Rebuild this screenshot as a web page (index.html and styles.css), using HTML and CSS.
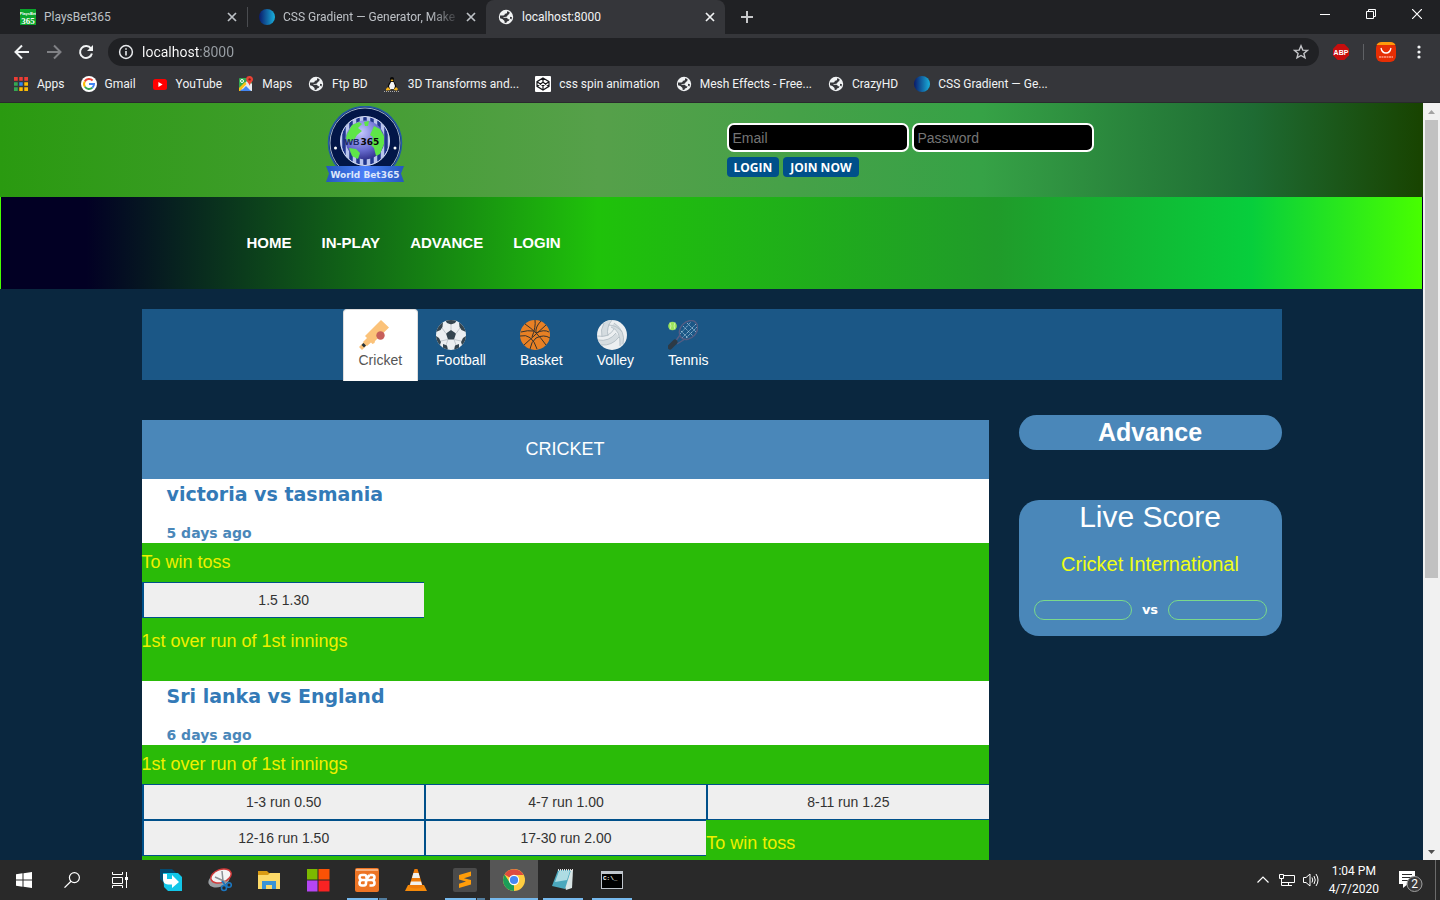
FILE: index.html
```html
<!DOCTYPE html>
<html lang="en">
<head>
<meta charset="utf-8">
<meta name="viewport" content="width=device-width, initial-scale=1">
<title>localhost:8000</title>
<link rel="stylesheet" href="styles.css">
</head>
<body>
<svg class="defs" aria-hidden="true">
  <symbol id="globe" viewBox="0 0 16 16">
    <circle cx="8" cy="8" r="7.2" fill="#f1f3f4"/>
    <path d="M2 6.500H5.500Q7 6.500 6.800 4.800Q8.500 5 9 4V2.200L11.500 3Q12 5.500 9.800 6Q9.600 8 7 8H5.500V8.800H8.500Q9.800 9 9.800 10.200H11.500Q11.500 12 9 12.500L8.200 14L6.600 13.800Q7 11.800 5.500 11Q5 9.600 2 9.200Z" fill="#35363a"/>
    <path d="M12 7.800L14 8.200L13.400 10.600L12 9.400Z" fill="#35363a"/>
  </symbol>
  <symbol id="gradient" viewBox="0 0 16 16">
    <linearGradient id="gradient-fill"><stop offset="0" stop-color="#0a1a6a"/><stop offset="1" stop-color="#19b0dc"/></linearGradient>
    <circle cx="8" cy="8" r="8" fill="url(#gradient-fill)"/>
  </symbol>
  <symbol id="close" viewBox="0 0 16 16"><path d="M4 4L12 12M12 4L4 12" stroke="currentColor" stroke-width="1.7"/></symbol>
</svg>

<div class="desktop">
  <div class="tabstrip">
    <div class="tab">
      <svg class="icon16" viewBox="0 0 16 16"><rect width="16" height="16" fill="#0ba52c"/><text x="8" y="6" class="fav-top">PlaysBet</text><text x="8" y="15" class="fav-bottom">365</text></svg>
      <span class="tab-title">PlaysBet365</span>
      <button class="tab-close" aria-label="Close tab"><svg class="icon16"><use href="#close"/></svg></button>
    </div>
    <div class="tab tab-divided">
      <svg class="icon16"><use href="#gradient"/></svg>
      <span class="tab-title tab-title-faded">CSS Gradient — Generator, Make</span>
      <button class="tab-close" aria-label="Close tab"><svg class="icon16"><use href="#close"/></svg></button>
    </div>
    <div class="tab tab-active">
      <svg class="icon16"><use href="#globe"/></svg>
      <span class="tab-title">localhost:8000</span>
      <button class="tab-close" aria-label="Close tab"><svg class="icon16"><use href="#close"/></svg></button>
    </div>
    <button class="tab-new" aria-label="New tab"><svg class="icon16" viewBox="0 0 16 16"><path d="M8 2V14M2 8H14" stroke="#c6c7c9" stroke-width="2"/></svg></button>
    <div class="window-buttons">
      <button class="window-button" aria-label="Minimize"><svg class="icon10" viewBox="0 0 10 10"><path d="M0 5.5H10" stroke="#fff"/></svg></button>
      <button class="window-button" aria-label="Restore"><svg class="icon10" viewBox="0 0 10 10"><path d="M.5 2.5H7.5V9.5H.5ZM2.5 2.5V.5H9.5V7.5H7.5" fill="none" stroke="#fff"/></svg></button>
      <button class="window-button" aria-label="Close"><svg class="icon10" viewBox="0 0 10 10"><path d="M0 0L10 10M10 0L0 10" stroke="#fff" stroke-width="1.2"/></svg></button>
    </div>
  </div>

  <div class="toolbar">
    <button class="tool" aria-label="Back"><svg class="icon16" viewBox="0 0 16 16"><path d="M15 8H2M8 1.5L1.5 8L8 14.5" fill="none" stroke="#f1f3f4" stroke-width="2"/></svg></button>
    <button class="tool" aria-label="Forward"><svg class="icon16" viewBox="0 0 16 16"><path d="M1 8H14M8 1.5L14.5 8L8 14.5" fill="none" stroke="#808185" stroke-width="2"/></svg></button>
    <button class="tool" aria-label="Reload"><svg class="icon16" viewBox="0 0 16 16"><path d="M13 4.6A6 6 0 1 0 13.9 9.4" fill="none" stroke="#f1f3f4" stroke-width="2"/><path d="M15 1V7H9Z" fill="#f1f3f4"/></svg></button>
    <div class="omnibox">
      <svg class="icon16" viewBox="0 0 16 16"><circle cx="8" cy="8" r="6.4" fill="none" stroke="#e8eaed" stroke-width="1.5"/><path d="M8 7V11.6M8 4.2V5.8" stroke="#e8eaed" stroke-width="1.6"/></svg>
      <input class="address" type="text" value="localhost:8000" aria-label="Address">
      <button class="star" aria-label="Bookmark this page"><svg class="icon16" viewBox="0 0 16 16"><path d="M8 1.8L9.8 6.1L14.4 6.4L10.9 9.4L12 13.9L8 11.5L4 13.9L5.1 9.4L1.6 6.4L6.2 6.1Z" fill="none" stroke="#c4c5c8" stroke-width="1.4"/></svg></button>
    </div>
    <button class="extension" aria-label="Adblock Plus"><svg class="icon16" viewBox="0 0 16 16"><path d="M4.7 0H11.3L16 4.7V11.3L11.3 16H4.7L0 11.3V4.7Z" fill="#c70d0d"/><text x="8" y="11" class="abp">ABP</text></svg></button>
    <span class="toolbar-divider"></span>
    <button class="extension" aria-label="AliExpress"><svg class="icon22" viewBox="0 0 22 22"><rect x="1" y="1" width="20" height="20" rx="6" fill="#e62e04"/><path d="M1.5 4Q3 1 7 1H15Q19 1 20.500 4Z" fill="#ff9a0c"/><path d="M6 7Q7 12 11 12T16 7" fill="none" stroke="#fff" stroke-width="1.3"/><path d="M4 16H18" stroke="#ff9c85" stroke-width="1.6" stroke-dasharray="2 .5"/></svg></button>
    <button class="extension" aria-label="Menu"><svg class="icon16" viewBox="0 0 16 16" fill="#f1f3f4"><circle cx="8" cy="3" r="1.6"/><circle cx="8" cy="8" r="1.6"/><circle cx="8" cy="13" r="1.6"/></svg></button>
  </div>

  <nav class="bookmarks" aria-label="Bookmarks">
    <a class="bookmark" href="#"><svg class="icon16" viewBox="0 0 16 16"><path d="M1 1H5V5H1ZM6 1H10V5H6ZM11 1H15V5H11Z" fill="#ee3d35"/><path d="M1 6H5V10H1Z" fill="#34a853"/><path d="M6 6H10V10H6Z" fill="#2f86ee"/><path d="M11 6H15V10H11Z" fill="#fbbc05"/><path d="M1 11H5V15H1Z" fill="#34a853"/><path d="M6 11H10V15H6ZM11 11H15V15H11Z" fill="#fbbc05"/><path d="M0 5.500H16M0 10.500H16M5.500 0V16M10.500 0V16" stroke="#35363a" stroke-width="1.5"/></svg>Apps</a>
    <a class="bookmark" href="#"><svg class="icon16" viewBox="0 0 16 16"><circle cx="8" cy="8" r="8" fill="#fff"/><g fill="none" stroke-width="2"><path d="M11.600 4.500A5 5 0 0 0 3.800 5.400" stroke="#ea4335"/><path d="M3.800 5.400A5 5 0 0 0 3.900 10.800" stroke="#fbbc05"/><path d="M3.900 10.800A5 5 0 0 0 11.300 11.700" stroke="#34a853"/><path d="M11.300 11.700A5 5 0 0 0 13 8H8" stroke="#4285f4"/></g></svg>Gmail</a>
    <a class="bookmark" href="#"><svg class="icon16" viewBox="0 0 16 16"><rect x="1" y="3" width="14" height="11" rx="2.500" fill="#f00"/><path d="M6.400 6L10.600 8.500L6.400 11Z" fill="#fff"/></svg>YouTube</a>
    <a class="bookmark" href="#"><svg class="icon16" viewBox="0 0 16 16"><rect x="1" y="2" width="13" height="13" rx="1" fill="#34a853"/><path d="M1 15L8 8L14 15Z" fill="#4285f4"/><path d="M1 13L10 4L14 8V15Z" fill="#e8eaed"/><path d="M3 15L8 10L13 15Z" fill="#4285f4"/><path d="M1 12L7 6L8.500 8L2 15H1Z" fill="#fbc116"/><circle cx="4" cy="5" r="1.500" fill="none" stroke="#fff"/><path d="M11.500 0A3.300 3.300 0 0 1 15 3.400C15 5.500 12 7 11.700 10C11.200 7 8.200 5.500 8.200 3.400A3.300 3.300 0 0 1 11.500 0Z" fill="#e84335"/><circle cx="11.600" cy="3.400" r="1.200" fill="#8b1d17"/></svg>Maps</a>
    <a class="bookmark" href="#"><svg class="icon16"><use href="#globe"/></svg>Ftp BD</a>
    <a class="bookmark" href="#"><svg class="icon16" viewBox="0 0 16 16"><path d="M6 2Q8 0 10 2L10 6Q13 9 12 13H4Q3 9 6 6Z" fill="#090909"/><path d="M7 6H9.500L11 10L10 13H6L5 10Z" fill="#f5f5f5"/><path d="M6.300 4L8 3.500L9.700 4L8 5.500ZM2 13L4 11L7 14L2 14.500ZM9.500 14L12 11L14 13L13 14.500Z" fill="#f7b51b"/><path d="M0 15.500H16" stroke="#aaa" stroke-dasharray="1 1"/></svg>3D Transforms and...</a>
    <a class="bookmark" href="#"><svg class="icon16" viewBox="0 0 16 16"><rect width="16" height="16" rx="1" fill="#fff"/><path d="M8 2L14 5.700V10.300L8 14L2 10.300V5.700ZM2 5.700L8 9.800L14 5.700M2 10.300L8 6.200L14 10.300M8 2V6.200M8 9.800V14" fill="none" stroke="#15161a" stroke-width="1.200"/></svg>css spin animation</a>
    <a class="bookmark" href="#"><svg class="icon16"><use href="#globe"/></svg>Mesh Effects - Free...</a>
    <a class="bookmark" href="#"><svg class="icon16"><use href="#globe"/></svg>CrazyHD</a>
    <a class="bookmark" href="#"><svg class="icon16"><use href="#gradient"/></svg>CSS Gradient — Ge...</a>
  </nav>

  <div class="viewport">
    <div class="site">
      <header class="masthead">
        <div class="masthead-inner">
          <a class="logo" href="#" aria-label="World Bet365">
            <svg class="logo-art" viewBox="0 0 78 78">
              <defs>
                <radialGradient id="ocean" cx=".4" cy=".3" r=".75"><stop offset="0" stop-color="#c5c8ff"/><stop offset=".6" stop-color="#6a6ed2"/><stop offset="1" stop-color="#2c2c86"/></radialGradient>
                <linearGradient id="ribbon"><stop offset="0" stop-color="#2457be"/><stop offset=".5" stop-color="#4c80fa"/><stop offset="1" stop-color="#2457be"/></linearGradient>
                <clipPath id="badge-clip"><circle cx="39" cy="35" r="24"/></clipPath>
              </defs>
              <circle cx="39" cy="37" r="36.500" fill="#021648" stroke="#2459a5" stroke-width="1.500"/>
              <circle cx="39" cy="37" r="35" fill="none" stroke="#c8d8ea" stroke-width=".8"/>
              <circle cx="39" cy="35" r="24.500" fill="#b8c3ed"/>
              <path d="M18 10V60M25 10V60M32 10V60M39 10V60M46 10V60M53 10V60M60 10V60" stroke="#20368d" stroke-width="3.500" clip-path="url(#badge-clip)"/>
              <circle cx="39" cy="35" r="24.500" fill="none" stroke="#d3dcf4" stroke-width="1"/>
              <circle cx="39" cy="34" r="19.500" fill="url(#ocean)"/>
              <path d="M21 28L26 19L33 16L36 18L32 22L36 25L31 29L28 34L22 36L20 32ZM23 42L30 43L34 47L32 53L26 50ZM38 16L43 15L42 20L39 20ZM48 20L54 23L58 30L58 38L54 48L50 50L48 42L45 39L47 31L44 29Z" fill="#5ee548"/>
              <text x="26" y="39" class="logo-wb">WB</text>
              <text x="44" y="39" class="logo-365">365</text>
              <circle cx="9.500" cy="42" r="1.500" fill="#fff"/><circle cx="69" cy="42" r="1.500" fill="#fff"/>
              <path d="M0 60H78L75 67.500L78 76H0L3 67.500Z" fill="url(#ribbon)"/>
              <text x="39" y="72" class="logo-name">World Bet365</text>
            </svg>
          </a>
          <form class="signin">
            <div class="signin-fields">
              <input class="field" type="email" placeholder="Email" aria-label="Email">
              <input class="field" type="password" placeholder="Password" aria-label="Password">
            </div>
            <div class="signin-actions">
              <button class="pill" type="button">LOGIN</button>
              <button class="pill" type="button">JOIN NOW</button>
            </div>
          </form>
        </div>
      </header>

      <nav class="menu" aria-label="Main">
        <div class="menu-inner">
          <a class="menu-link" href="#">HOME</a>
          <a class="menu-link" href="#">IN-PLAY</a>
          <a class="menu-link" href="#">ADVANCE</a>
          <a class="menu-link" href="#">LOGIN</a>
        </div>
      </nav>

      <main class="content">
        <nav class="sports" aria-label="Sports">
          <a class="sport sport-active" href="#">
            <svg class="sport-icon" viewBox="0 0 30 30"><path d="M22 0L30 7.500L16 21L15.500 23L13.500 24L12 22.500L8 26L4 22L8 18L6 16Z" fill="#fbc279"/><path d="M5 22L8 25L3 30L0 27Z" fill="#fbc279"/><path d="M4.500 23L7 25.500L5 27.500L2.500 25Z" fill="#24333d"/><circle cx="21.500" cy="15.500" r="4.200" fill="#c75f5b"/></svg>
            Cricket</a>
          <a class="sport" href="#">
            <svg class="sport-icon" viewBox="0 0 30 30"><clipPath id="football-clip"><circle cx="15" cy="15" r="15"/></clipPath><circle cx="15" cy="15" r="15" fill="#eceff1"/><path clip-path="url(#football-clip)" d="M15 10L20 13.500L18 19.500H12L10 13.500ZM9 0H21L19 3L15 4.500L11 3ZM0 5L7 2L6.500 7L4.500 10L0 12ZM30 5L23 2L23.500 7L25.500 10L30 12ZM0 16L3 18L5 22L4 25L0 25ZM30 16L27 18L25 22L26 25L30 25ZM7 24L11 25.500L12 30L7 29ZM23 24L19 25.500L18 30L23 29Z" fill="#35454f"/><path d="M15 4V10M6 8L10 13.500M24 8L20 13.500M5 21L12 19.500M25 21L18 19.500M12 19.500L10 25M18 19.500L20 25" fill="none" stroke="#bcc3c8" stroke-width=".9"/></svg>
            Football</a>
          <a class="sport" href="#">
            <svg class="sport-icon" viewBox="0 0 30 30"><circle cx="15" cy="15" r="15" fill="#e88024"/><path d="M5 4Q17 12 26 25M26 5L4 25M15 0Q16 7 12 17M1 12Q8 10 13 11M0 16Q12 13 17 29M21 1Q15 7 16 13Q24 9 29 12M10 29Q11 22 16 18Q24 14 30 18" fill="none" stroke="#35322e" stroke-width="1"/></svg>
            Basket</a>
          <a class="sport" href="#">
            <svg class="sport-icon" viewBox="0 0 30 30"><circle cx="15" cy="15" r="15" fill="#eceff1"/><path d="M7 3Q4 9 5 17L11 16Q10 7 15 0Q10 0 7 3ZM14 7Q24 10 23 26L26 24Q29 11 17 3ZM1 20Q12 22 19 13L22 17Q16 26 4 25Z" fill="#d5dce0"/><path d="M7 3Q3 10 5 17M15 0Q9 7 11 16M0 16Q12 18 17 9M1 20Q12 22 19 13M4 25Q15 26 22 17M14 7Q24 10 23 26M17 3Q29 11 26 24M11 5Q20 5 25 12" fill="none" stroke="#b3bec5" stroke-width=".9"/></svg>
            Volley</a>
          <a class="sport" href="#">
            <svg class="sport-icon" viewBox="0 0 30 30"><circle cx="4.500" cy="6" r="4.300" fill="#9be35b"/><path d="M2 2.500Q4 6 2 9.500M7 2.500Q5 6 7 9.500" fill="none" stroke="#d9f7b8" stroke-width=".8"/><path d="M13 11L20 18M15 6L25 16M19 3L28 12M12 14L23 2M14 18L28 4M18 18L29 7" stroke="#a9c8dd" stroke-width=".8" stroke-dasharray="1.600 .7"/><ellipse cx="20.500" cy="10" rx="10.500" ry="8" transform="rotate(-48 20.500 10)" fill="none" stroke="#555d83" stroke-width="1.400"/><path d="M12 15L7 22M17 19L9 24" stroke="#555d83" stroke-width="1.400"/><path d="M7 22L2 27" stroke="#2d3a45" stroke-width="5" stroke-linecap="round"/></svg>
            Tennis</a>
        </nav>

        <div class="columns">
          <section class="fixtures">
            <h2 class="fixtures-title">CRICKET</h2>
            <article>
              <header class="match"><a class="match-name" href="#">victoria vs tasmania</a><p class="match-age">5 days ago</p></header>
              <div class="market">
                <h3 class="market-title">To win toss</h3>
                <div class="odds"><button class="odd">1.5 1.30</button></div>
                <h3 class="market-title market-next market-last">1st over run of 1st innings</h3>
              </div>
            </article>
            <article>
              <header class="match"><a class="match-name" href="#">Sri lanka vs England</a><p class="match-age">6 days ago</p></header>
              <div class="market">
                <h3 class="market-title">1st over run of 1st innings</h3>
                <div class="odds">
                  <button class="odd">1-3 run 0.50</button>
                  <button class="odd">4-7 run 1.00</button>
                  <button class="odd">8-11 run 1.25</button>
                  <button class="odd">12-16 run 1.50</button>
                  <button class="odd">17-30 run 2.00</button>
                  <h3 class="market-title market-next">To win toss</h3>
                </div>
              </div>
            </article>
          </section>
          <aside class="side">
            <h2 class="advance">Advance</h2>
            <section class="score">
              <h2 class="score-title">Live Score</h2>
              <p class="score-league">Cricket International</p>
              <div class="score-teams"><span class="team"></span><span class="versus">vs</span><span class="team"></span></div>
            </section>
          </aside>
        </div>
      </main>
    </div>
    <div class="scrollbar" aria-hidden="true">
      <svg class="scroll-arrow" viewBox="0 0 17 17"><path d="M5 11L8.500 7L12 11Z" fill="#a3a3a3"/></svg>
      <div class="scroll-track"><div class="scroll-thumb"></div></div>
      <svg class="scroll-arrow" viewBox="0 0 17 17"><path d="M5 7L8.500 11L12 7Z" fill="#505050"/></svg>
    </div>
  </div>

  <footer class="taskbar">
    <button class="task" aria-label="Start"><svg class="icon16" viewBox="0 0 16 16"><path d="M0 2.200L6.500 1.300V7.500H0ZM7.500 1.200L16 0V7.500H7.500ZM0 8.500H6.500V14.700L0 13.800ZM7.500 8.500H16V16L7.500 14.800Z" fill="#fff"/></svg></button>
    <button class="task" aria-label="Search"><svg class="icon16" viewBox="0 0 16 16"><circle cx="10.400" cy="5.600" r="5" fill="none" stroke="#fff" stroke-width="1.200"/><path d="M7 9.200L.5 15.600" stroke="#fff" stroke-width="1.300"/></svg></button>
    <button class="task" aria-label="Task view"><svg class="icon16" viewBox="0 0 16 16"><path d="M.5 0V2.500H10.500V0M.5 5.500H10.500V11.500H.5ZM.5 16V13.500H10.500V16M14.500 0V16" fill="none" stroke="#fff"/><path d="M13 5H16V8H13Z" fill="#fff"/></svg></button>
    <div class="task-apps">
      <button class="task" aria-label="Share"><svg class="icon22" viewBox="0 0 22 22"><path d="M0 0H12L16 4L8 16L4 14L0 10Z" fill="#044a70"/><path d="M3 4H18L22 8V22H8L4 18Z" fill="#12c6e8"/><path d="M3 5H7V10H12V6L19 13L12 19V15.500H8Q3 15 3 10Z" fill="#fff"/></svg></button>
      <button class="task" aria-label="Snipping Tool"><svg class="icon24" viewBox="0 0 24 24"><ellipse cx="11" cy="12" rx="11" ry="7" transform="rotate(-20 11 12)" fill="#9b9fa3"/><ellipse cx="13" cy="8" rx="10.500" ry="6.500" transform="rotate(-20 13 8)" fill="#f4f4f4" stroke="#d33b3b" stroke-width="1.500"/><path d="M14 3L15 13M7 9L18 14" stroke="#8c9094" stroke-width="1.500"/><circle cx="16" cy="20" r="2.500" fill="none" stroke="#1c77c0" stroke-width="1.600"/><circle cx="21" cy="17" r="2.300" fill="none" stroke="#1c77c0" stroke-width="1.600"/><path d="M14 13L18 18" stroke="#1c77c0" stroke-width="2"/></svg></button>
      <button class="task" aria-label="File Explorer"><svg class="icon22" viewBox="0 0 22 22"><path d="M0 2H9L11 4H21V19H0Z" fill="#d99b13"/><path d="M0 6H10L12 4H22V20H0Z" fill="#fcd968"/><path d="M4 20V12H18V20H14V16H8V20Z" fill="#3a93d6"/></svg></button>
      <button class="task" aria-label="Tiles"><svg class="icon24" viewBox="0 0 24 24"><path d="M1 1H11.500V11.500H1Z" fill="#7cb900"/><path d="M12.500 1H23.500V11.500H12.500Z" fill="#fb5205"/><path d="M1 12.500H11.500V23.500H1Z" fill="#b545f3"/><path d="M12.500 12.500H23.500V23.500H12.500Z" fill="#f92323"/></svg></button>
      <button class="task task-grouped" aria-label="XAMPP"><svg class="icon24" viewBox="0 0 24 24"><rect width="24" height="24" rx="2" fill="#ed7424"/><path d="M1 1H23V3H1Z" fill="#f8b17e"/><path d="M9.500 7H7Q4.500 7 4.500 9.200Q4.500 11.500 7 12Q4.500 12.500 4.500 15Q4.500 17.500 7 17.500H9Q11 17.500 11 15V14Q11 12 13 12Q15 12 17 12Q19.500 12.500 19.500 15Q19.500 17.500 17 17.500H14.500M14.500 7H17Q19.500 7 19.500 9.200Q19.500 11.500 17 12M9.500 7Q11.500 7 11.500 9.500T14.500 7M7 12H11" fill="none" stroke="#fff" stroke-width="2.600"/></svg></button>
      <button class="task" aria-label="VLC"><svg class="icon22" viewBox="0 0 22 22"><path d="M3 16H19L22 22H0Z" fill="#f58a0a"/><path d="M9.500 0H12.500L18 18Q11 21 4 18Z" fill="#ee7a09"/><path d="M8.400 4H13.600L15 9H7ZM6 12.500H16L17 16H5Z" fill="#f0f0ee"/></svg></button>
      <button class="task task-grouped" aria-label="Sublime Text"><svg class="icon24" viewBox="0 0 24 24"><rect width="24" height="24" rx="2" fill="#4b4b4b"/><path d="M6 7L18 3.500V8L11 10.300L18 12V16.500L6 20V15.700L13 13.500L6 11.500Z" fill="#ff9d0a"/></svg></button>
      <button class="task task-open task-current" aria-label="Chrome"><svg class="icon22" viewBox="0 0 22 22"><circle cx="11" cy="11" r="11" fill="#ffcd40"/><path d="M11 11L1.500 5.500A11 11 0 0 1 20.600 6H11Z" fill="#dd4b3e"/><path d="M1.500 5.500L6.700 13.500L11 16L11 22A11 11 0 0 1 1.500 5.500Z" fill="#1b9d58"/><path d="M11 22L15.500 13.500V16Z" fill="#ffcd40"/><circle cx="11" cy="11" r="5.200" fill="#fff"/><circle cx="11" cy="11" r="4.100" fill="#4587f3"/></svg></button>
      <button class="task task-open task-inset" aria-label="Notepad"><svg class="icon24" viewBox="0 0 24 24"><path d="M7 2H22L21 20L15 22Z" fill="#d9e5e5"/><path d="M7 2H20L14 21L1 18Z" fill="#4ba8bd"/><path d="M8 3H19L16 12L4 14Z" fill="#aedce3"/><path d="M7 2H22" stroke="#dedede" stroke-width="2" stroke-dasharray="1 1"/></svg></button>
      <button class="task task-open task-inset" aria-label="Command Prompt"><svg class="icon22" viewBox="0 0 22 22"><rect y="2" width="22" height="18" fill="#bfc5cc"/><rect x="1" y="5" width="20" height="14" fill="#000"/><text x="2" y="11" class="prompt">C:\_</text></svg></button>
    </div>
    <div class="tray">
      <svg class="icon16" viewBox="0 0 16 16"><path d="M2.500 10.500L8 5L13.500 10.500" fill="none" stroke="#fff" stroke-width="1.200"/></svg>
      <svg class="icon16" viewBox="0 0 16 16"><path d="M5 3.500H15.500V10.500H3M9.500 10.500V13.500M5 13.500H13M.5 2.500H4.500V6.500H.5ZM2.500 6.500V13.500H5" fill="none" stroke="#fff"/></svg>
      <svg class="icon16" viewBox="0 0 16 16"><path d="M.5 5.500H3L7 2V14L3 10.500H.5ZM9 5.500Q10.500 8 9 10.500M11 4Q13.500 8 11 12M13 2Q17 8 13 14" fill="none" stroke="#fff"/></svg>
      <time class="clock"><span>1:04 PM</span><span>4/7/2020</span></time>
      <button class="notices" aria-label="2 notifications"><svg class="icon24" viewBox="0 0 24 24"><path d="M0 3H16V16H9L4 20V16H0Z" fill="#fff"/><path d="M3 6.500H13M3 9.500H13M3 12.500H9" stroke="#2a2a2a"/><circle cx="15.500" cy="16" r="7.500" fill="#3a3a3a" stroke="#a0a0a0"/><text x="15.500" y="20" class="notice-count">2</text></svg></button>
    </div>
  </footer>
</div>
</body>
</html>
```
FILE: styles.css
```css
* { box-sizing: border-box; }

body {
  margin: 0;
  background: #0a273f;
  font-family: "Liberation Sans", Arial, sans-serif;
  font-size: 14px;
  line-height: 20px;
  color: #333;
}

h2, h3, p { margin: 0; font-weight: 400; }
a { color: inherit; text-decoration: none; }
button { margin: 0; padding: 0; border: 0; background: none; color: inherit; font: inherit; }
svg { display: block; flex: none; }

.defs { position: absolute; width: 0; height: 0; }
.icon10 { width: 10px; height: 10px; }
.icon16 { width: 16px; height: 16px; }
.icon22 { width: 22px; height: 22px; }
.icon24 { width: 24px; height: 24px; }

.desktop { display: flex; flex-direction: column; height: 100vh; overflow: hidden; }

/* Browser chrome */
.tabstrip, .toolbar, .bookmarks, .taskbar { flex: none; font-family: Roboto, "Open Sans", sans-serif; font-size: 12px; }

.tabstrip { display: flex; height: 34px; padding-left: 8px; background: #202124; color: #bdc1c6; }
.tab { display: flex; align-items: center; gap: 8px; flex: 0 1 239px; min-width: 0; padding: 0 7px 0 12px; }
.tab-divided { background: linear-gradient(#4a4c50, #4a4c50) left center / 1px 20px no-repeat; }
.tab-active { background: #35363a; border-radius: 8px 8px 0 0; color: #f1f3f4; }
.tab-title { flex: 1; min-width: 0; white-space: nowrap; }
.tab-title-faded { -webkit-mask-image: linear-gradient(90deg, #000 85%, rgba(0, 0, 0, .2)); mask-image: linear-gradient(90deg, #000 85%, rgba(0, 0, 0, .2)); }
.tab-new { width: 44px; display: grid; place-items: center; }
.window-buttons { display: flex; align-items: center; margin-left: auto; padding-bottom: 6px; }
.window-button { display: grid; place-items: center; width: 46px; height: 28px; }

.fav-top { font: 700 4px "Liberation Sans", sans-serif; fill: #fff; text-anchor: middle; }
.fav-bottom { font: 700 9px "Liberation Serif", serif; fill: #fff; text-anchor: middle; }
.abp { font: 700 7px "Liberation Sans", sans-serif; fill: #fff; text-anchor: middle; }

.toolbar { display: flex; align-items: center; height: 36px; padding: 0 9px 0 6px; background: #35363a; }
.tool { display: grid; place-items: center; width: 32px; height: 28px; }
.omnibox { display: flex; align-items: center; flex: 1; gap: 8px; height: 28px; margin: 0 10px 0 6px; padding: 0 10px; border-radius: 14px; background: #202124; }
.address {
  flex: 1;
  min-width: 0;
  padding: 0;
  border: 0;
  outline: 0;
  background: linear-gradient(90deg, #fff 58px, #9aa0a6 58px);
  -webkit-background-clip: text;
  background-clip: text;
  color: transparent;
  font: 14px/20px Roboto, sans-serif;
}
.extension { display: grid; place-items: center; width: 24px; height: 28px; }
.toolbar-divider { width: 1px; height: 16px; margin: 0 10px; background: #5f6165; }
.extension:last-child { margin-left: 9px; }

.bookmarks { display: flex; align-items: center; gap: 16px; height: 33px; padding: 0 13px 4px; border-bottom: 1px solid #292a2d; background: #35363a; color: #f1f3f4; white-space: nowrap; }
.bookmark { display: flex; align-items: center; gap: 8px; }

/* Site */
.viewport { display: flex; flex: 1; min-height: 0; }
.site { flex: 1; min-width: 0; overflow: hidden; background: #0a273f; }

.masthead { background: linear-gradient(90deg, #2a9a10 0%, #56a04a 42%, #36a246 69%, #1e6b33 88%, #184300 100%); }
.masthead-inner { display: grid; grid-template-columns: 1fr 1fr; max-width: 1170px; min-height: 94px; margin: 0 auto; }
.logo { padding: 3px 0 0 199px; }
.logo-art { width: 78px; height: 78px; }
.logo-wb { font: 700 9px "Liberation Sans", sans-serif; fill: #1c2a63; text-anchor: middle; }
.logo-365 { font: 700 9px "DejaVu Sans", sans-serif; fill: #080808; text-anchor: middle; }
.logo-name { font: 700 9px "DejaVu Sans", sans-serif; fill: #dce6fb; text-anchor: middle; }

.signin { padding: 20px 15px 0; }
.signin-fields { display: flex; gap: 3px; }
.field { width: 182px; height: 29px; padding: 0 4px; border: 2px solid #fff; border-radius: 7px; background: #000; color: #fff; font: 14px "Liberation Sans", Arial, sans-serif; }
.field::placeholder { color: #757575; }
.signin-actions { display: flex; gap: 4px; margin-top: 5px; }
.pill { height: 20px; padding: 0 7px; border-radius: 4px; background: #00508a; color: #fff; font: 700 12px "Open Sans", sans-serif; }

.menu { border: 1px solid transparent; border-width: 0 1px; background: linear-gradient(90deg, #020024 0%, #020024 6%, #1fc20a 42%, #209b2a 70%, #07ce3c 88%, #48ff00 100%); }
.menu-inner { display: flex; align-items: center; max-width: 1140px; min-height: 92px; margin: 0 auto; padding-left: 90px; }
.menu-link { padding: 15px; color: #fff; font-size: 15px; font-weight: 700; }

.content { max-width: 1140px; margin: 20px auto 0; }
.sports { display: flex; gap: 2px; height: 71px; padding-left: 201px; background: #1b5786; color: #fff; }
.sport { height: 72px; padding: 11px 16px; }
.sport-active { border: 1px solid #ddd; border-bottom: 0; border-radius: 4px 4px 0 0; padding: 10px 15px; background: #fff; color: #555; }
.sport-icon { width: 30px; height: 30px; }

.columns { display: grid; grid-template-columns: 847fr 263fr; gap: 30px; margin-top: 35px; }
.fixtures { margin-top: 5px; }
.fixtures-title { padding: 19px 0 20px; background: #4a87b9; color: #fff; font-size: 18px; text-align: center; }
.match { padding-left: 25px; background: #fff; font-family: "Arial Black", "DejaVu Sans", sans-serif; font-weight: 700; }
.match-name { display: block; color: #337ab7; font-size: 19px; line-height: 30px; }
.match-age { padding-top: 14px; color: #4a87b9; font-size: 14px; font-weight: 700; }
.market { background: #2abb08; }
.market-title { padding: 9px 0 10px; color: #f0f000; font-size: 18px; }
.market-next { padding-top: 13px; }
.market-last { padding-bottom: 30px; }
.odds { display: grid; grid-template-columns: repeat(3, 1fr); }
.odd { height: 36px; border: 1px solid #00508a; border-width: 1px 0 1px 2px; background: #efefef; color: #333; }

.advance { border-radius: 18px; background: #4a87b9; color: #fff; font-size: 25px; font-weight: 700; line-height: 35px; text-align: center; }
.score { margin-top: 50px; padding: 0 15px 16px; border-radius: 20px; background: #4a87b9; text-align: center; }
.score-title { color: #fff; font-size: 30px; line-height: 34px; }
.score-league { padding: 20px 0 26px; color: #f0ff14; font-size: 20px; }
.score-teams { display: flex; align-items: center; gap: 10px; }
.team { flex: 1; height: 20px; border: 1px solid #7ad98b; border-radius: 10px; }
.versus { color: #fff; font: 700 13px/20px "DejaVu Sans", sans-serif; }

.scrollbar { display: flex; flex-direction: column; flex: none; width: 17px; background: #f1f1f1; }
.scroll-arrow { width: 17px; height: 17px; }
.scroll-track { flex: 1; padding: 0 2px; }
.scroll-thumb { height: 63.4%; background: #c1c1c1; }

/* Taskbar */
.taskbar { display: flex; height: 40px; background: #292929; color: #fff; }
.task { position: relative; display: grid; place-items: center; width: 48px; height: 40px; }
.task-apps { display: flex; gap: 1px; margin-left: 3px; }
.task-current { background: #565656; }
.task-open::after, .task-grouped::after { content: ""; position: absolute; right: 0; bottom: 0; left: 0; height: 2px; background: #76b9ed; }
.task-inset::after { right: 4px; left: 4px; }
.task-grouped::after { right: 4px; left: 4px; background: linear-gradient(90deg, #76b9ed 31px, #292929 31px, #292929 32px, #527d9e 32px); }
.prompt { font: 700 6px "Liberation Mono", monospace; fill: #fff; }
.tray { display: flex; align-items: center; gap: 8px; margin: 0 4px 0 auto; padding-right: 12px; border-right: 1px solid #6b6b6b; }
.clock { display: flex; flex-direction: column; line-height: 18px; margin-left: 2px; text-align: center; }
.notices { margin-left: 12px; }
.notice-count { font: 12px Roboto, sans-serif; fill: #fff; text-anchor: middle; }
```
